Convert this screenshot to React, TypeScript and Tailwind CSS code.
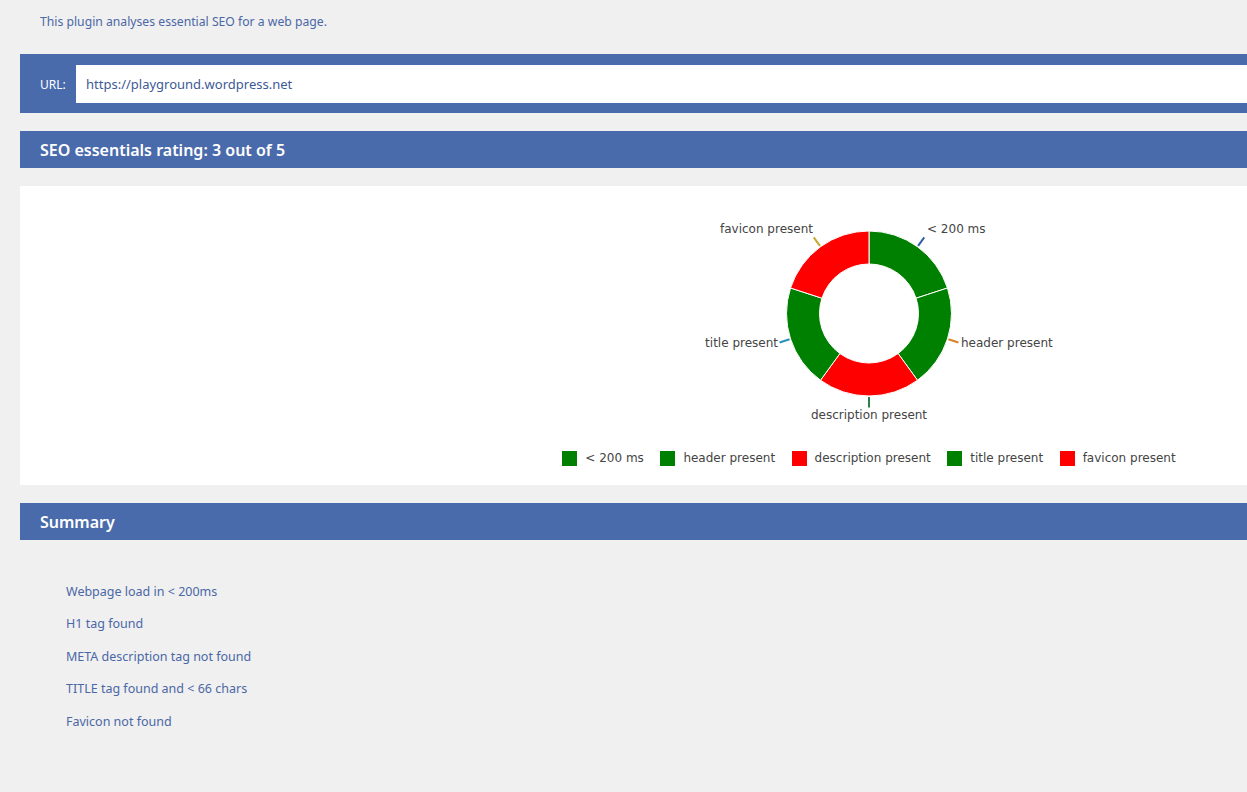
import React from "react";

const ui = "font-['Segoe_UI','Noto_Sans',sans-serif]";

const slices = [
  { label: "< 200 ms", color: "#008000", tick: "#2f5fa8" },
  { label: "header present", color: "#008000", tick: "#d9822b" },
  { label: "description present", color: "#ff0000", tick: "#2e7d4f" },
  { label: "title present", color: "#008000", tick: "#2a8fbd" },
  { label: "favicon present", color: "#ff0000", tick: "#c4a82a" },
];

const summary = [
  "Webpage load in < 200ms",
  "H1 tag found",
  "META description tag not found",
  "TITLE tag found and < 66 chars",
  "Favicon not found",
];

const CX = 250;
const CY = 127.5;
const R = 82.5;
const r = 49.5;

function pt(rad: number, deg: number) {
  const a = (deg * Math.PI) / 180;
  return [CX + rad * Math.sin(a), CY - rad * Math.cos(a)];
}

function arc(start: number, end: number) {
  const [x1, y1] = pt(R, start);
  const [x2, y2] = pt(R, end);
  const [x3, y3] = pt(r, end);
  const [x4, y4] = pt(r, start);
  return `M${x1} ${y1} A${R} ${R} 0 0 1 ${x2} ${y2} L${x3} ${y3} A${r} ${r} 0 0 0 ${x4} ${y4} Z`;
}

// label placement for each slice (svg coords)
const labels: { x: number; y: number; anchor: "start" | "middle" | "end" }[] = [
  { x: 308, y: 43, anchor: "start" },
  { x: 342, y: 157, anchor: "start" },
  { x: 250, y: 229, anchor: "middle" },
  { x: 159, y: 157, anchor: "end" },
  { x: 194, y: 43, anchor: "end" },
];

function Donut() {
  return (
    <svg width="500" height="240" viewBox="0 0 500 240" className="block mx-auto">
      {slices.map((s, i) => (
        <path key={s.label} d={arc(i * 72, (i + 1) * 72)} fill={s.color} stroke="#ffffff" strokeWidth="1" />
      ))}
      {slices.map((s, i) => {
        const mid = i * 72 + 36;
        const [ax, ay] = pt(83.5, mid);
        const [bx, by] = pt(94, mid);
        return <line key={s.label} x1={ax} y1={ay} x2={bx} y2={by} stroke={s.tick} strokeWidth="2" />;
      })}
      {slices.map((s, i) => (
        <text
          key={s.label}
          x={labels[i].x}
          y={labels[i].y}
          textAnchor={labels[i].anchor}
          dominantBaseline="middle"
          fill="#444444"
          fontSize="12"
          fontFamily="'DejaVu Sans', Verdana, sans-serif"
        >
          {s.label}
        </text>
      ))}
    </svg>
  );
}

function Heading({ children }: { children: React.ReactNode }) {
  return (
    <div className="h-[37px] bg-[#4a6bab] flex items-center px-[20px]">
      <h2 className="text-white text-[16px] font-semibold">{children}</h2>
    </div>
  );
}

export default function App() {
  return (
    <div className={`w-full min-h-[792px] overflow-hidden bg-[#f0f0f0] ${ui}`}>
      <div className="w-[1698px] ml-[20px] pt-[13px]">
        <p className="px-[20px] text-[12.2px] text-[#4a67a6] leading-[18px]">
          This plugin analyses essential SEO for a web page.
        </p>

        {/* URL */}
        <div className="mt-[23px] h-[59px] bg-[#4a6bab] flex items-center pl-[20px]">
          <span className="text-white text-[12px] w-[36px] pt-[2px]">URL:</span>
          <div className="flex-1 h-[38px] bg-white flex items-center px-[10px] pt-[3px] text-[13px] text-[#3d5a96]">
            https://playground.wordpress.net
          </div>
        </div>

        <div className="mt-[18px]">
          <Heading>SEO essentials rating: 3 out of 5</Heading>
        </div>

        {/* Chart */}
        <div className="mt-[18px] h-[299px] bg-white">
          <Donut />
          <div className="mt-[23px] flex justify-center gap-[16.5px] font-['DejaVu_Sans',sans-serif] text-[12px] text-[#444444]">
            {slices.map((s) => (
              <div key={s.label} className="flex items-center gap-[8px]">
                <span className="w-[15px] h-[15px]" style={{ backgroundColor: s.color }} />
                <span>{s.label}</span>
              </div>
            ))}
          </div>
        </div>

        <div className="mt-[18px]">
          <Heading>Summary</Heading>
        </div>

        <ul className="pt-[36px] pl-[46px] text-[12.5px] text-[#4a67a6]">
          {summary.map((s) => (
            <li key={s} className="h-[32.5px] flex items-center">
              {s}
            </li>
          ))}
        </ul>
      </div>
    </div>
  );
}
